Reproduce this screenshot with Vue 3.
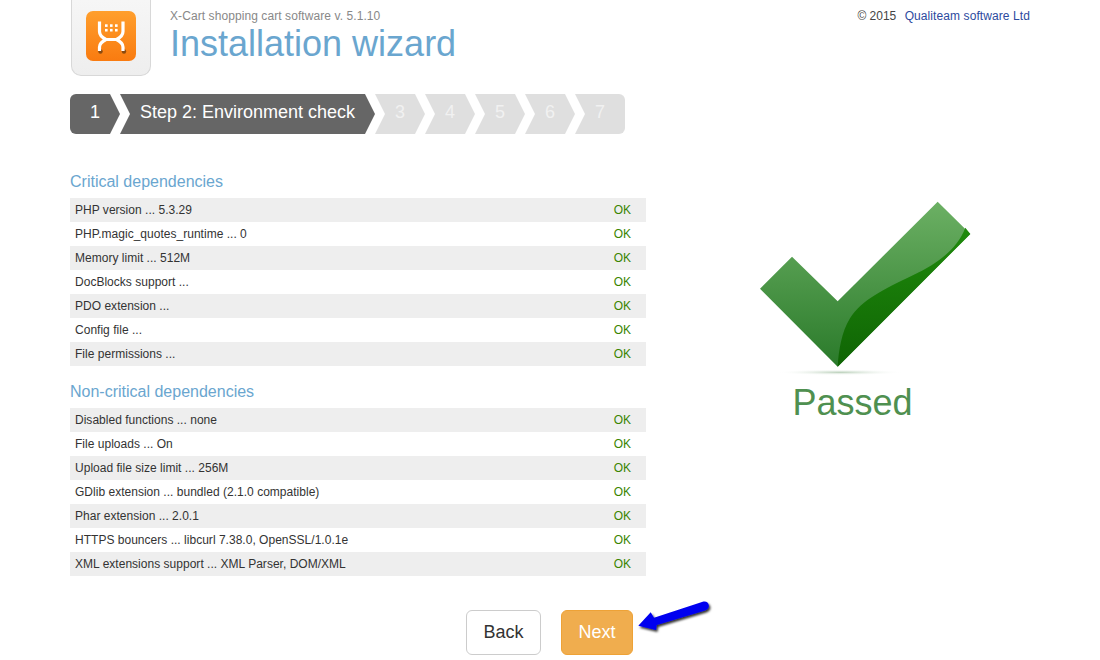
<template>
  <div class="page">
    <header class="header">
      <div class="logo-box">
        <div class="logo">
          <svg viewBox="0 0 50 50" width="50" height="50">
            <circle cx="14.500" cy="40.500" r="2.200" fill="#8a4a10" />
            <circle cx="38" cy="40.500" r="2.200" fill="#8a4a10" />
            <path d="M13.500 10.500V20.500C13.500 24 17 27 20 28.500C17 30 13.500 33 13.500 36V40M37 10.500V20.500C37 24 33.500 27 30.500 28.500C33.500 30 37 33 37 36V40M20 28.500H30.500" fill="none" stroke="#fff" stroke-width="3.200" />
            <g fill="#fff">
              <rect v-for="d in dots" :key="d.x + '-' + d.y" :x="d.x" :y="d.y" width="2.600" height="2.600" />
            </g>
          </svg>
        </div>
      </div>
      <div class="title-block">
        <div class="version">X-Cart shopping cart software v. 5.1.10</div>
        <h1>Installation wizard</h1>
      </div>
      <div class="copyright">© 2015 <a href="#">Qualiteam software Ltd</a></div>
    </header>

    <div class="steps">
      <div
        v-for="(s, i) in steps"
        :key="i"
        :class="['step', { done: s.active, wide: s.wide, first: i === 0, last: i === steps.length - 1 }]"
      >
        {{ s.label }}
      </div>
    </div>

    <div class="main">
      <div class="checks">
        <section v-for="group in groups" :key="group.title">
          <h2>{{ group.title }}</h2>
          <div v-for="row in group.rows" :key="row" class="row">
            <span>{{ row }}</span>
            <span class="ok">OK</span>
          </div>
        </section>
      </div>
      <div class="result">
        <svg viewBox="0 0 750 560" width="250" height="186.670">
          <defs>
            <linearGradient id="lightGrad" x1="0" y1="35" x2="0" y2="530" gradientUnits="userSpaceOnUse">
              <stop offset="0" stop-color="#6cb064" />
              <stop offset="1" stop-color="#2a7a2a" />
            </linearGradient>
            <linearGradient id="darkGrad" x1="0" y1="120" x2="0" y2="530" gradientUnits="userSpaceOnUse">
              <stop offset="0" stop-color="#1f8a0c" />
              <stop offset="1" stop-color="#0f6404" />
            </linearGradient>
            <radialGradient id="floorGrad">
              <stop offset="0" stop-color="#b9cfb9" />
              <stop offset="1" stop-color="#ffffff" stop-opacity="0" />
            </radialGradient>
          </defs>
          <ellipse cx="300" cy="547" rx="190" ry="9" fill="url(#floorGrad)" />
          <path d="M593 35L691 132L293 530L60 296L156 200L293 334Z" fill="url(#lightGrad)" />
          <path d="M676 113C650 180 590 222 520 255C430 298 365 330 330 385C305 425 296 480 293 530L691 132Z" fill="url(#darkGrad)" />
        </svg>
        <div class="passed">Passed</div>
      </div>
    </div>

    <div class="buttons">
      <button class="btn back">Back</button>
      <div class="next-wrap">
        <button class="btn next">Next</button>
        <svg class="arrow" viewBox="0 0 84 40" width="84" height="40">
          <defs>
            <filter id="arrowShadow" x="-20%" y="-40%" width="140%" height="180%">
              <feDropShadow dx="1.500" dy="2" stdDeviation="1.200" flood-color="#000" flood-opacity="0.800" />
            </filter>
          </defs>
          <path d="M4.300 25.700L16.700 12.300L20 17.700L69.500 1.500C75 0.500 77.500 8 71 10.500L22.700 25L22 30Z" fill="#0000f0" filter="url(#arrowShadow)" />
        </svg>
      </div>
    </div>
  </div>
</template>

<script setup>
const dots = []
for (const y of [13.3, 17.9]) {
  for (const x of [19, 24, 29]) {
    dots.push({ x, y })
  }
}

const steps = [
  { label: '1', active: true },
  { label: 'Step 2: Environment check', active: true, wide: true },
  { label: '3' },
  { label: '4' },
  { label: '5' },
  { label: '6' },
  { label: '7' }
]

const groups = [
  {
    title: 'Critical dependencies',
    rows: [
      'PHP version ... 5.3.29',
      'PHP.magic_quotes_runtime ... 0',
      'Memory limit ... 512M',
      'DocBlocks support ...',
      'PDO extension ...',
      'Config file ...',
      'File permissions ...'
    ]
  },
  {
    title: 'Non-critical dependencies',
    rows: [
      'Disabled functions ... none',
      'File uploads ... On',
      'Upload file size limit ... 256M',
      'GDlib extension ... bundled (2.1.0 compatible)',
      'Phar extension ... 2.0.1',
      'HTTPS bouncers ... libcurl 7.38.0, OpenSSL/1.0.1e',
      'XML extensions support ... XML Parser, DOM/XML'
    ]
  }
]
</script>

<style>
html, body {
  background: #fff;
  overflow: hidden;
}
</style>

<style scoped>
.page {
  width: 1100px;
  height: 660px;
  box-sizing: border-box;
  padding: 0 70px;
  font-family: "Liberation Sans", Arial, sans-serif;
  color: #333;
  overflow: hidden;
}

.header {
  display: flex;
  height: 94px;
}

.logo-box {
  width: 80px;
  height: 76px;
  margin-left: 1px;
  box-sizing: border-box;
  border: 1px solid #d8d8d8;
  border-top: none;
  border-radius: 0 0 10px 10px;
  background: linear-gradient(#f6f6f6, #eeeeee);
  padding: 11px 0 0 14px;
}

.logo {
  width: 50px;
  height: 50px;
  border-radius: 7px;
  background: linear-gradient(#ff9f2d, #f97b10);
}

.logo svg {
  display: block;
}

.title-block {
  margin-left: 19px;
  padding-top: 9px;
}

.version {
  font-size: 12px;
  line-height: 14px;
  letter-spacing: 0.08px;
  color: #888;
}

h1 {
  margin: 1px 0 0;
  font-size: 36px;
  font-weight: normal;
  line-height: 40px;
  color: #6aa6cf;
}

.copyright {
  margin-left: auto;
  padding-top: 9px;
  font-size: 12px;
  line-height: 14px;
  color: #444;
}

.copyright a {
  margin-left: 5px;
  letter-spacing: 0.09px;
  color: #2c4a9e;
  text-decoration: none;
}

.steps {
  display: flex;
  width: 555px;
  height: 40px;
  border-radius: 6px;
  overflow: hidden;
}

.step {
  width: 50px;
  height: 40px;
  line-height: 36px;
  font-size: 18px;
  text-align: center;
  color: #f1f1f1;
  background: #dfdfdf;
  clip-path: polygon(0 0, calc(100% - 10px) 0, 100% 50%, calc(100% - 10px) 100%, 0 100%, 10px 50%);
}

.step.done {
  background: #666;
  color: #fff;
}

.step.wide {
  width: 255px;
  padding-left: 20px;
  box-sizing: border-box;
  text-align: left;
}

.step.first {
  clip-path: polygon(0 0, calc(100% - 10px) 0, 100% 50%, calc(100% - 10px) 100%, 0 100%);
}

.step.last {
  clip-path: polygon(0 0, 100% 0, 100% 100%, 0 100%, 10px 50%);
}

.main {
  display: flex;
  padding-top: 37px;
}

.checks {
  width: 576px;
}

h2 {
  margin: 15px 0 7px;
  padding-top: 1px;
  height: 19px;
  font-size: 16px;
  font-weight: normal;
  line-height: 20px;
  color: #6aa6cf;
}

section:first-child h2 {
  margin-top: 0;
}

.row {
  display: flex;
  justify-content: space-between;
  height: 24px;
  padding: 0 15px 0 5px;
  font-size: 12px;
  line-height: 24px;
  letter-spacing: 0.02px;
  color: #333;
}

.row:nth-of-type(odd) {
  background: #eee;
}

.ok {
  letter-spacing: 0;
  color: #3a8500;
}

.result {
  width: 250px;
  margin: 19px 0 0 94px;
}

.result svg {
  display: block;
}

.passed {
  margin-top: 6px;
  padding-right: 25px;
  font-size: 36px;
  line-height: 40px;
  text-align: center;
  color: #4f9050;
}

.buttons {
  display: flex;
  justify-content: center;
  gap: 20px;
  margin-top: 34px;
  padding-right: 1px;
}

.btn {
  display: block;
  height: 45px;
  box-sizing: border-box;
  border-radius: 6px;
  font-family: inherit;
  font-size: 18px;
  padding: 0;
}

.back {
  width: 75px;
  background: #fff;
  border: 1px solid #ccc;
  color: #333;
}

.next-wrap {
  position: relative;
}

.next {
  width: 72px;
  background: #f0ad4e;
  border: 1px solid #eea236;
  color: #fff;
}

.arrow {
  position: absolute;
  left: 73px;
  top: -10px;
}
</style>
